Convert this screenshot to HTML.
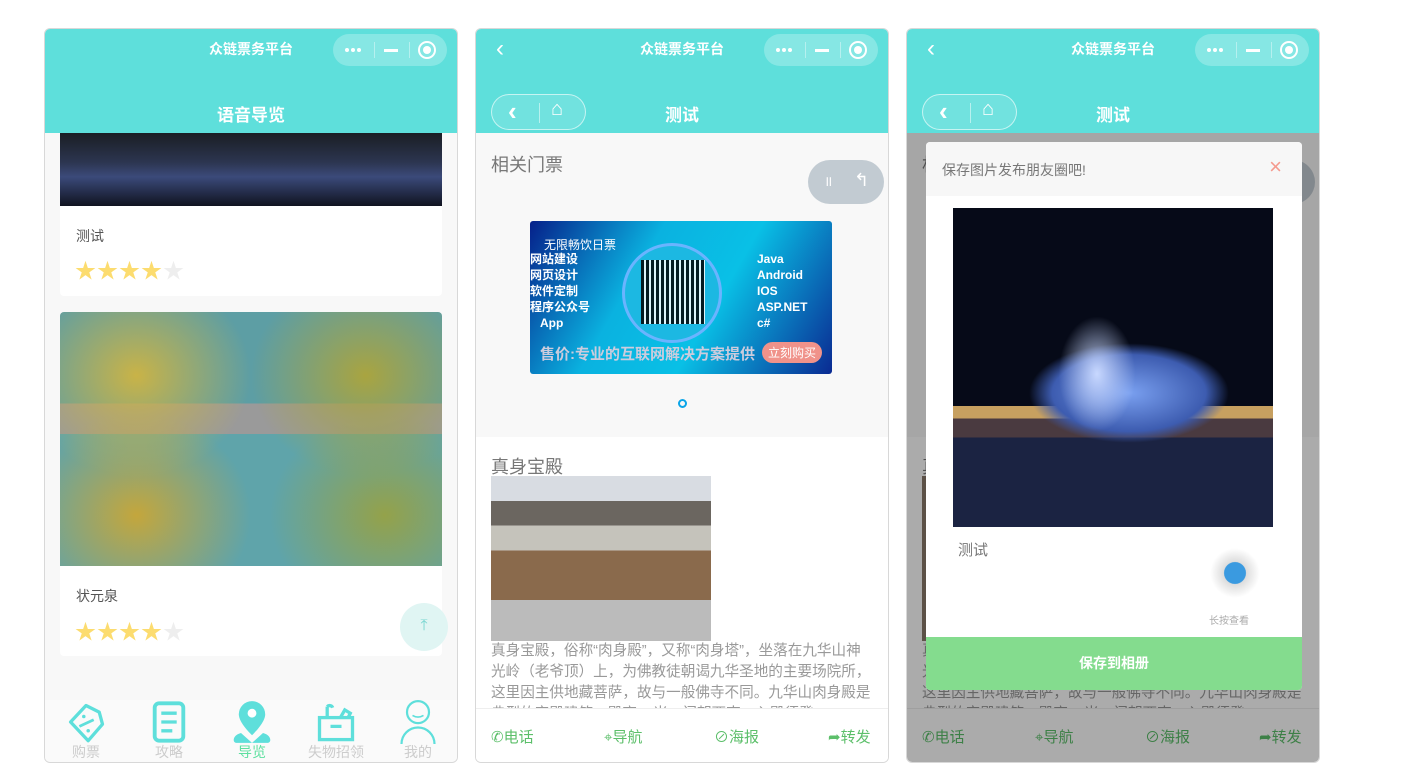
<!DOCTYPE html>
<html><head><meta charset="utf-8"><style>
*{margin:0;padding:0;box-sizing:border-box}
body{width:1402px;height:780px;background:#fff;position:relative;overflow:hidden;font-family:"Liberation Sans","Noto Sans CJK SC",sans-serif}
.ph{position:absolute;top:28px;width:414px;height:735px;border:1px solid #d8d8d8;border-radius:6px;overflow:hidden;background:#f8f8f8}
.hd{position:absolute;left:0;top:0;width:100%;height:104px;background:#5edfdb}
.t1{position:absolute;top:10px;width:100%;text-align:center;color:#fff;font-size:14px;font-weight:bold}
.t2{position:absolute;top:72px;width:100%;text-align:center;color:#fff;font-size:17px;font-weight:bold}
.cap{position:absolute;right:10px;top:5px;width:114px;height:32px;border-radius:16px;background:rgba(255,255,255,.25)}
.cap .d{position:absolute;left:12px;top:14px;font-size:0}
.cap .d i{display:inline-block;width:4px;height:4px;border-radius:2px;background:#fff;margin-right:2px}
.cap .ln{position:absolute;left:51px;top:15px;width:14px;height:3px;background:#fff}
.cap .sep{position:absolute;top:8px;width:1px;height:16px;background:rgba(255,255,255,.4)}
.cap .c{position:absolute;left:85px;top:7px;width:18px;height:18px;border:2px solid #fff;border-radius:50%}
.cap .c:after{content:"";position:absolute;left:3px;top:3px;width:8px;height:8px;border-radius:50%;background:#fff}
.card{position:absolute;left:15px;width:382px;background:#fff;border-radius:4px;overflow:hidden}
.star{color:#fcdc6f;font-size:21px;letter-spacing:1px}
.tab{position:absolute;bottom:0;left:0;width:100%;height:62px;background:#fafafa}
.ti{position:absolute;top:0;width:82px;text-align:center;font-size:14px;color:#ccc;line-height:16px}
.ti svg{display:block;margin:0 auto 0}
.bb{position:absolute;bottom:0;left:0;width:100%;height:54px;background:#fff;border-top:1px solid #eee;font-size:15px;color:#5cbf6a}
.bb span{position:absolute;top:17px}
.txt{position:absolute;left:15px;top:204px;width:384px;font-size:14.6px;line-height:21px;color:#999}
</style></head><body>

<div class="ph" style="left:44px">
 <div style="position:absolute;left:15px;top:104px;width:382px;height:73px;background:linear-gradient(#1a1e24,#2c3550 40%,#3b4a7a 60%,#101320)"></div>
 <div class="card" style="top:177px;height:90px;border-radius:0 0 4px 4px"><div style="position:absolute;left:16px;top:20px;font-size:14px;color:#555">测试</div><div class="star" style="position:absolute;left:15px;top:49px">★★★★<span style="color:#eee">★</span></div></div>
 <div class="card" style="top:283px;height:344px">
  <div style="height:254px;background:radial-gradient(ellipse 30% 40% at 20% 25%,#c9b347,transparent),radial-gradient(ellipse 30% 40% at 80% 25%,#a9a440,transparent),radial-gradient(ellipse 30% 40% at 20% 80%,#c4a63c,transparent),radial-gradient(ellipse 30% 40% at 85% 80%,#94a24a,transparent),linear-gradient(180deg,#5d9ea4 0 36%,#9a9a9a 36% 48%,#5fa4aa 48%)"></div>
  <div style="position:absolute;left:16px;top:274px;font-size:14px;color:#555">状元泉</div><div class="star" style="position:absolute;left:15px;top:304px">★★★★<span style="color:#eee">★</span></div>
 </div>
 <div style="position:absolute;left:355px;top:574px;width:48px;height:48px;border-radius:50%;background:#e0f5f3;color:#7ad6d1;text-align:center;line-height:46px;font-size:16px">⤒</div>
 <div class="hd"><div class="t1">众链票务平台</div><div class="t2">语音导览</div><div class="cap"><div class="d"><i></i><i></i><i></i></div><div class="sep" style="left:41px"></div><div class="ln"></div><div class="sep" style="left:76px"></div><div class="c"></div></div></div>
 <div class="tab">
  <div class="ti" style="left:0"><svg width="44" height="44" viewBox="0 0 40 40"><path d="M6 20 L20 5 L32 11 L35 22 L22 37 Z" fill="none" stroke="#5edfdb" stroke-width="3" stroke-linejoin="round"/><line x1="14" y1="24" x2="27" y2="18" stroke="#5edfdb" stroke-width="2.5"/><circle cx="18" cy="15" r="1.6" fill="#5edfdb"/><circle cx="22" cy="28" r="1.6" fill="#5edfdb"/></svg>购票</div>
  <div class="ti" style="left:83px"><svg width="44" height="44" viewBox="0 0 40 40"><rect x="7" y="3" width="26" height="34" rx="4" fill="none" stroke="#5edfdb" stroke-width="3.5"/><path d="M13 12h14M13 20h14M13 28h10" stroke="#5edfdb" stroke-width="3"/></svg>攻略</div>
  <div class="ti" style="left:166px;color:#5ee0a0"><svg width="44" height="44" viewBox="0 0 40 40"><path d="M20 1a12 12 0 0 1 12 12c0 8-12 19-12 19S8 21 8 13A12 12 0 0 1 20 1z" fill="#5edfdb"/><circle cx="20" cy="12" r="4" fill="#fff"/><path d="M10 30 C2 32 2 39 6 39 H34 C38 39 38 32 30 30 L20 39Z" fill="#5edfdb"/></svg>导览</div>
  <div class="ti" style="left:249px;width:84px"><svg width="44" height="44" viewBox="0 0 40 40"><rect x="5" y="16" width="30" height="20" fill="none" stroke="#5edfdb" stroke-width="3"/><path d="M15 24h10M12 16V6M12 6a3 3 0 0 1 5 1M24 16l4-7 5 3-2 4" stroke="#5edfdb" stroke-width="3" fill="none"/></svg>失物招领</div>
  <div class="ti" style="left:332px"><svg width="44" height="44" viewBox="0 0 40 40"><circle cx="20" cy="11" r="10" fill="none" stroke="#5edfdb" stroke-width="2"/><path d="M15 14q5 3 10 0" stroke="#5edfdb" stroke-width="1.5" fill="none"/><path d="M5 40a15 15 0 0 1 30 0" stroke="#5edfdb" stroke-width="2" fill="none"/></svg>我的</div>
 </div>
</div>

<div class="ph" style="left:475px">
 <div style="position:absolute;left:15px;top:122px;font-size:18px;color:#777">相关门票</div>
 <div style="position:absolute;right:4px;top:131px;width:76px;height:44px;border-radius:22px;background:#c2cbd2;color:#fff;font-size:14px"><span style="position:absolute;left:16px;top:12px">॥</span><span style="position:absolute;left:46px;top:10px;font-size:18px">↰</span></div>
 <div style="position:absolute;left:54px;top:192px;width:302px;height:153px;border-radius:3px;background:linear-gradient(120deg,#06208a,#0ab2e0 35%,#09c0e6 60%,#0a2a92);overflow:hidden;color:#fff;font-size:12px;font-weight:bold">
  <div style="position:absolute;left:14px;top:15px;font-weight:normal">无限畅饮日票</div>
  <div style="position:absolute;left:0;top:30px;line-height:16px">网站建设<br>网页设计<br>软件定制<br>程序公众号<br>&nbsp;&nbsp;&nbsp;App</div>
  <div style="position:absolute;left:227px;top:30px;line-height:16px">Java<br>Android<br>IOS<br>ASP.NET<br>c#</div>
  <div style="position:absolute;left:92px;top:22px;width:100px;height:100px;border-radius:50%;border:3px solid #6ab4ff;background:#1cb8e2"><div style="position:absolute;left:16px;top:14px;width:64px;height:64px;background:repeating-linear-gradient(90deg,#000 0 3px,#fff 3px 5px),#000;opacity:.85"></div></div>
  <div style="position:absolute;left:10px;top:122px;font-size:15px;color:#ccd">售价:专业的互联网解决方案提供</div>
  <div style="position:absolute;right:10px;top:121px;background:#f0928a;border-radius:12px;padding:2px 6px;font-weight:normal">立刻购买</div>
 </div>
 <div style="position:absolute;left:202px;top:370px;width:9px;height:9px;border:2px solid #0aa5e8;border-radius:50%"></div>
 <div style="position:absolute;left:0;top:408px;width:100%;height:330px;background:#fff">
  <div style="position:absolute;left:15px;top:16px;font-size:18px;color:#777">真身宝殿</div>
  <div style="position:absolute;left:15px;top:39px;width:220px;height:165px;background:linear-gradient(#d8dce2 0 15%,#6b6660 15% 30%,#c5c3bb 30% 45%,#8a6a4c 45% 75%,#bbb 75%)"></div>
  <div class="txt">真身宝殿，俗称“肉身殿”，又称“肉身塔”，坐落在九华山神光岭（老爷顶）上，为佛教徒朝谒九华圣地的主要场院所，这里因主供地藏菩萨，故与一般佛寺不同。九华山肉身殿是典型的宫殿建筑，殿高15米，门朝西南，入殿须登</div>
 </div>
 <div class="bb"><span style="left:15px">✆电话</span><span style="left:128px">⌖导航</span><span style="left:238px">⊘海报</span><span style="left:352px">➦转发</span></div>
 <div class="hd"><div class="t1">众链票务平台</div><div style="position:absolute;left:20px;top:6px;color:#fff;font-size:24px">‹</div><div class="t2">测试</div><div class="cap"><div class="d"><i></i><i></i><i></i></div><div class="sep" style="left:41px"></div><div class="ln"></div><div class="sep" style="left:76px"></div><div class="c"></div></div>
  <div style="position:absolute;left:15px;top:65px;width:95px;height:36px;border-radius:18px;border:1px solid rgba(255,255,255,.6);background:rgba(255,255,255,.12);color:#fff"><span style="position:absolute;left:16px;top:1px;font-size:26px;font-weight:bold">‹</span><span style="position:absolute;left:47px;top:8px;width:1px;height:20px;background:rgba(255,255,255,.5)"></span><span style="position:absolute;left:59px;top:3px;font-size:20px;font-weight:bold">⌂</span></div></div>
</div>

<div class="ph" style="left:906px">
 <div style="position:absolute;left:15px;top:122px;font-size:18px;color:#777">相关门票</div>
 <div style="position:absolute;right:4px;top:131px;width:76px;height:44px;border-radius:22px;background:#c2cbd2"></div>
 <div style="position:absolute;left:0;top:408px;width:100%;height:330px;background:#fff">
  <div style="position:absolute;left:15px;top:16px;font-size:18px;color:#777">真身宝殿</div>
  <div style="position:absolute;left:15px;top:39px;width:220px;height:165px;background:#8a7a6a"></div>
  <div class="txt">真身宝殿，俗称“肉身殿”，又称“肉身塔”，坐落在九华山神光岭（老爷顶）上，为佛教徒朝谒九华圣地的主要场院所，这里因主供地藏菩萨，故与一般佛寺不同。九华山肉身殿是典型的宫殿建筑，殿高15米，门朝西南，入殿须登</div>
 </div>
 <div class="bb"><span style="left:15px">✆电话</span><span style="left:128px">⌖导航</span><span style="left:238px">⊘海报</span><span style="left:352px">➦转发</span></div>
 <div style="position:absolute;left:0;top:104px;width:100%;height:640px;background:rgba(0,0,0,.33)"></div>
 <div class="hd"><div class="t1">众链票务平台</div><div style="position:absolute;left:20px;top:6px;color:#fff;font-size:24px">‹</div><div class="t2">测试</div><div class="cap"><div class="d"><i></i><i></i><i></i></div><div class="sep" style="left:41px"></div><div class="ln"></div><div class="sep" style="left:76px"></div><div class="c"></div></div>
  <div style="position:absolute;left:15px;top:65px;width:95px;height:36px;border-radius:18px;border:1px solid rgba(255,255,255,.6);background:rgba(255,255,255,.12);color:#fff"><span style="position:absolute;left:16px;top:1px;font-size:26px;font-weight:bold">‹</span><span style="position:absolute;left:47px;top:8px;width:1px;height:20px;background:rgba(255,255,255,.5)"></span><span style="position:absolute;left:59px;top:3px;font-size:20px;font-weight:bold">⌂</span></div></div>
 <div style="position:absolute;left:19px;top:113px;width:376px;height:548px;background:#fff;border-radius:4px;overflow:hidden">
  <div style="height:54px;background:#f7f7f7;position:relative"><span style="position:absolute;left:16px;top:18px;font-size:14px;color:#777">保存图片发布朋友圈吧!</span><span style="position:absolute;right:20px;top:12px;font-size:22px;color:#f59a8e">×</span></div>
  <div style="position:absolute;left:27px;top:66px;width:320px;height:319px;background:radial-gradient(ellipse 12% 18% at 45% 52%,#c8d8ff,transparent),radial-gradient(ellipse 40% 20% at 55% 58%,#7aa0f0,#3d5cb0 60%,transparent 78%),linear-gradient(#060a18 0 62%,#c7a060 62% 66%,#4a3a40 66% 72%,#1b2342 72%)"></div>
  <div style="position:absolute;left:32px;top:397px;font-size:15px;color:#777">测试</div>
  <div style="position:absolute;left:284px;top:406px;width:50px;height:50px;border-radius:50%;background:radial-gradient(circle,#3a9ae0 30%,#ddd 32%,#fff 70%)"></div>
  <div style="position:absolute;left:283px;top:470px;font-size:10px;color:#aaa">长按查看</div>
  <div style="position:absolute;left:0;bottom:0;width:100%;height:53px;background:#84dc8e;color:#fff;font-size:14px;font-weight:bold;text-align:center;line-height:53px">保存到相册</div>
 </div>
</div>
</body></html>
